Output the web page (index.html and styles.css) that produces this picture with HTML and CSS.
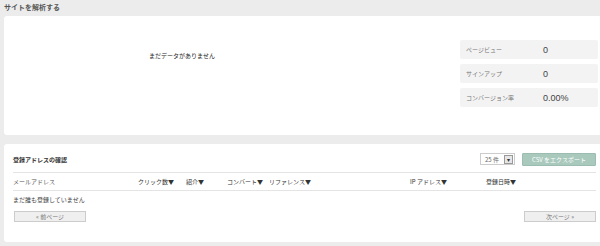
FILE: index.html
```html
<!DOCTYPE html>
<html lang="ja">
<head>
<meta charset="UTF-8">
<title>サイトを解析する</title>
<link rel="stylesheet" href="styles.css">
</head>
<body>
<div class="section-title">サイトを解析する</div>
<div class="panel panel-stats">
  <div class="empty-chart">まだデータがありません</div>
  <div class="stats">
    <div class="stat"><span class="stat-label">ページビュー</span><span class="stat-value">0</span></div>
    <div class="stat"><span class="stat-label">サインアップ</span><span class="stat-value">0</span></div>
    <div class="stat"><span class="stat-label">コンバージョン率</span><span class="stat-value">0.00%</span></div>
  </div>
</div>

<div class="panel panel-list">
  <div class="toolbar">
    <div class="list-title">登録アドレスの確認</div>
    <div class="select">
      <span>25 件</span>
      <span class="select-arrow">▾</span>
    </div>
    <button class="export-button">CSV をエクスポート</button>
  </div>
  <div class="table-head">
    <span class="col col-mail">メールアドレス</span>
    <span class="col col-click">クリック数▼</span>
    <span class="col col-ref">紹介▼</span>
    <span class="col col-conv">コンバート▼</span>
    <span class="col col-refer">リファレンス▼</span>
    <span class="col col-ip">IP アドレス▼</span>
    <span class="col col-date">登録日時▼</span>
  </div>
  <div class="no-rows">まだ誰も登録していません</div>
  <div class="pager">
    <button class="pager-button">« 前ページ</button>
    <button class="pager-button">次ページ »</button>
  </div>
</div>
</body>
</html>
```

FILE: styles.css
```css
body {
  margin: 0;
  background-color: #ececec;
  font-family: "Noto Sans CJK JP", "Liberation Sans", sans-serif;
  font-size: 6px;
  color: #444;
  overflow: hidden;
}

.section-title {
  height: 16px;
  line-height: 14px;
  padding-left: 4px;
  font-size: 7px;
  font-weight: bold;
  color: #555;
}

.panel {
  background-color: #fff;
  margin-left: 4px;
  border-radius: 3px 0 0 3px;
}

/* bloque de estadisticas */
.panel-stats {
  height: 119px;
  display: flex;
}

.empty-chart {
  width: 356px;
  padding-top: 35px;
  text-align: center;
  color: #222;
}

.stats {
  margin-left: 100px;
  padding-top: 24px;
  display: flex;
  flex-direction: column;
  gap: 5px;
}

.stat {
  width: 138px;
  height: 19px;
  background-color: #f3f3f3;
  border-radius: 2px;
  display: flex;
  align-items: center;
}

.stat-label {
  width: 77px;
  padding-left: 6px;
  color: #777;
}

.stat-value {
  font-family: "Liberation Sans", sans-serif;
  font-size: 9px;
  color: #444;
}

/* lista de registros */
.panel-list {
  margin-top: 9px;
  height: 98px;
  padding: 0 4px 0 9px;
}

.toolbar {
  height: 29px;
  display: flex;
  align-items: center;
  padding-top: 2px;
  border-bottom: 1px solid #e4e4e4;
  box-sizing: border-box;
}

.list-title {
  flex: 1;
  font-weight: bold;
  color: #333;
}

.select {
  width: 35px;
  height: 12px;
  border: 1px solid #ccc;
  box-sizing: border-box;
  display: flex;
  align-items: center;
  justify-content: space-between;
  padding: 0 1px 0 4px;
  font-size: 6px;
  color: #666;
  margin-right: 7px;
}

.select-arrow {
  width: 7px;
  height: 7px;
  border: 1px solid #999;
  background-color: #e6e6e6;
  font-size: 6px;
  line-height: 7px;
  text-align: center;
  color: #333;
}

.export-button {
  width: 74px;
  height: 13px;
  padding: 0;
  border: 1px solid #9bbcb0;
  background-color: #a9c9bd;
  color: #fff;
  font-family: inherit;
  font-size: 6px;
  border-radius: 1px;
}

.table-head {
  height: 17px;
  display: flex;
  align-items: center;
  border-bottom: 1px solid #e4e4e4;
  color: #333;
}

.col {
  white-space: nowrap;
}

.col-mail { width: 125px; color: #555; }
.col-click { width: 48px; }
.col-ref { width: 41px; }
.col-conv { width: 42px; }
.col-refer { width: 141px; }
.col-ip { width: 76px; }

.no-rows {
  height: 20px;
  line-height: 18px;
  color: #444;
}

.pager {
  display: flex;
  justify-content: space-between;
  padding-left: 1px;
}

.pager-button {
  width: 72px;
  height: 11px;
  padding: 0;
  border: 1px solid #ccc;
  background-color: #efefef;
  color: #777;
  font-family: inherit;
  font-size: 6px;
  line-height: 9px;
}
```
